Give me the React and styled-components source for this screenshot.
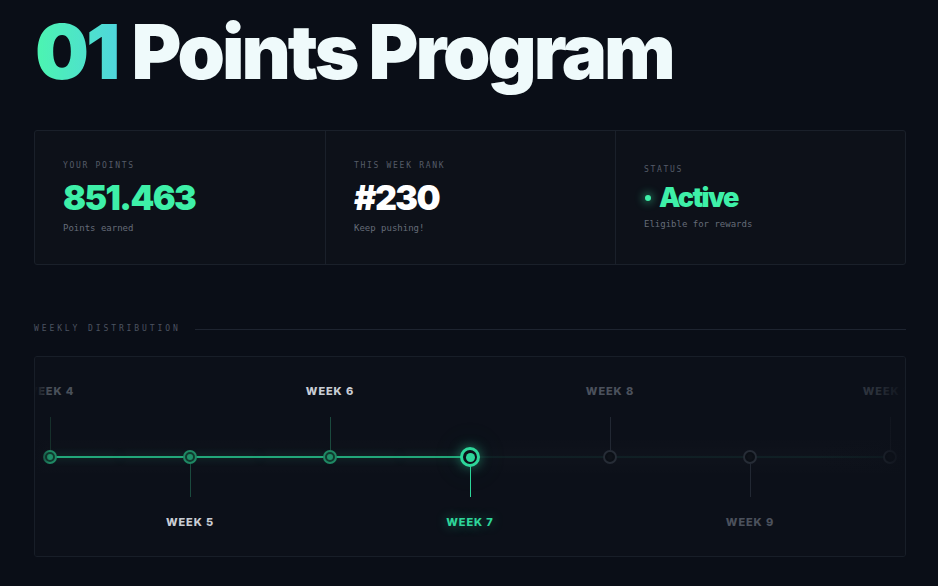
import React from 'react'
import styled, { createGlobalStyle, css } from 'styled-components'

const GREEN = '#2ed69a'
const MONO = `"DejaVu Sans Mono", "Liberation Mono", monospace`
const SANS = `Inter, "Liberation Sans", sans-serif`

const GlobalStyle = createGlobalStyle`
  html, body {
    margin: 0;
    padding: 0;
    background: #0a0e17;
  }
  body {
    font-family: ${SANS};
    color: #eef4f6;
  }
`

const Page = styled.div`
  width: 938px;
  height: 586px;
  box-sizing: border-box;
  padding: 13px 32px 0 34px;
  overflow: hidden;
  background: #0a0e17;
`

const Title = styled.h1`
  margin: 0 0 41px 1px;
  font-family: ${SANS};
  font-weight: 900;
  font-size: 76px;
  line-height: 76px;
  letter-spacing: -3px;
  color: #effafb;
  white-space: nowrap;
`

const TitleNum = styled.span`
  background: linear-gradient(90deg, #4cf5b0 0%, #4fd6dc 100%);
  -webkit-background-clip: text;
  background-clip: text;
  color: transparent;
  margin-right: 14px;
`

const StatsCard = styled.div`
  display: grid;
  grid-template-columns: repeat(3, 1fr);
  height: 135px;
  box-sizing: border-box;
  border: 1px solid #1a202a;
  border-radius: 3px;
  background: #0d1119;
`

const StatCell = styled.div`
  display: flex;
  flex-direction: column;
  justify-content: center;
  padding: 0 28px;
  & + & {
    border-left: 1px solid #1a202a;
  }
`

const StatLabel = styled.div`
  font-family: ${MONO};
  font-size: 8px;
  line-height: 10px;
  letter-spacing: 1.7px;
  color: #555c68;
  text-transform: uppercase;
`

const StatValue = styled.div`
  margin-top: 8px;
  font-family: ${SANS};
  font-weight: 900;
  font-size: ${({ $size }) => $size || 34}px;
  line-height: 1.1;
  letter-spacing: -1.6px;
  color: ${({ $tone }) => ($tone === 'green' ? '#3ef0a8' : '#ffffff')};
  display: flex;
  align-items: center;
`

const StatusDot = styled.span`
  width: 6px;
  height: 6px;
  border-radius: 50%;
  background: #3ef0a8;
  box-shadow: 0 0 8px 2px rgba(62, 240, 168, 0.45);
  margin: 0 8px 0 1px;
`

const StatNote = styled.div`
  margin-top: 6px;
  font-family: ${MONO};
  font-size: 9px;
  line-height: 12px;
  color: #656c78;
`

const SectionHead = styled.div`
  display: flex;
  align-items: center;
  gap: 14px;
  margin: 59px 0 22px;
  height: 10px;
`

const SectionLabel = styled.div`
  font-family: ${MONO};
  font-size: 8px;
  line-height: 10px;
  letter-spacing: 2.9px;
  color: #4c5360;
  white-space: nowrap;
`

const SectionRule = styled.div`
  flex: 1;
  height: 1px;
  background: #1e2430;
`

const TimelineCard = styled.div`
  position: relative;
  height: 201px;
  box-sizing: border-box;
  border: 1px solid #181e28;
  border-radius: 3px;
  background:
    linear-gradient(180deg, transparent 40%, rgba(255, 255, 255, 0.012) 50%, transparent 60%),
    #0c1019;
  overflow: hidden;

  &::before,
  &::after {
    content: '';
    position: absolute;
    top: 0;
    bottom: 0;
    pointer-events: none;
    z-index: 3;
  }
  &::before {
    left: 0;
    width: 14px;
    background: linear-gradient(90deg, #0c1019 0%, rgba(12, 16, 25, 0) 100%);
  }
  &::after {
    right: 0;
    width: 90px;
    background: linear-gradient(90deg, rgba(12, 16, 25, 0) 0%, rgba(12, 16, 25, 0.35) 70%, rgba(12, 16, 25, 0.7) 86%, #0c1019 100%);
  }
`

const Track = styled.div`
  display: flex;
  margin-left: -55px;
  padding-top: 27px;
`

const Week = styled.div`
  flex: none;
  width: 140px;
  display: flex;
  flex-direction: column;
  align-items: center;
`

const WeekLabel = styled.div`
  height: 14px;
  font-family: ${SANS};
  font-weight: 800;
  font-size: 11px;
  line-height: 14px;
  letter-spacing: 0.9px;
  white-space: nowrap;
  color: ${({ $color }) => $color};
  visibility: ${({ $show }) => ($show ? 'visible' : 'hidden')};
  ${({ $glow }) => $glow && css`text-shadow: 0 0 12px rgba(46, 214, 154, 0.45);`}
`

const Stem = styled.div`
  width: 1px;
  height: 33px;
  margin: ${({ $side }) => ($side === 'top' ? '19px 0 0' : '0 0 18px')};
  background: ${({ $color }) => $color};
  visibility: ${({ $show }) => ($show ? 'visible' : 'hidden')};
`

const lineTone = {
  none: 'transparent',
  done: '#22a679',
  todo: 'rgba(46, 214, 154, 0.07)',
}

const NodeRow = styled.div`
  position: relative;
  width: 100%;
  height: 14px;
  display: flex;
  align-items: center;
  justify-content: center;

  &::before,
  &::after {
    content: '';
    position: absolute;
    top: 6px;
    height: 2px;
    width: 50%;
  }
  &::before {
    left: 0;
    background: ${({ $left }) => lineTone[$left]};
    ${({ $left }) => $left === 'done' && css`box-shadow: 0 0 8px rgba(46, 214, 154, 0.3);`}
  }
  &::after {
    left: 50%;
    background: ${({ $right }) => lineTone[$right]};
    ${({ $right }) => $right === 'done' && css`box-shadow: 0 0 8px rgba(46, 214, 154, 0.3);`}
  }
`

const nodeStyles = {
  done: css`
    width: 14px;
    height: 14px;
    border: 2px solid rgba(46, 214, 154, 0.5);
    background: #103a2e;
    &::after {
      width: 6px;
      height: 6px;
      background: #1f8e68;
    }
  `,
  current: css`
    width: 20px;
    height: 20px;
    border: 3px solid ${GREEN};
    background: #0c1019;
    box-shadow: 0 0 12px rgba(46, 214, 154, 0.5), 0 0 36px 4px rgba(46, 214, 154, 0.07);
    &::after {
      width: 9px;
      height: 9px;
      background: ${GREEN};
    }
  `,
  todo: css`
    width: 14px;
    height: 14px;
    border: 2px solid #262c36;
    background: #0b0f16;
    &::after {
      width: 6px;
      height: 6px;
      background: #0e1219;
    }
  `,
}

const Node = styled.div`
  position: relative;
  z-index: 2;
  flex: none;
  box-sizing: border-box;
  border-radius: 50%;
  display: flex;
  align-items: center;
  justify-content: center;
  &::after {
    content: '';
    border-radius: 50%;
  }
  ${({ $state }) => nodeStyles[$state]}
`

const weeks = [
  { n: 4, side: 'top', state: 'done', left: 'none', right: 'done', label: '#4a505a', stem: '#16302b' },
  { n: 5, side: 'bottom', state: 'done', left: 'done', right: 'done', label: '#c9cdd4', stem: '#1b4a3e' },
  { n: 6, side: 'top', state: 'done', left: 'done', right: 'done', label: '#c9cdd4', stem: '#1b4a3e' },
  { n: 7, side: 'bottom', state: 'current', left: 'done', right: 'todo', label: GREEN, stem: GREEN },
  { n: 8, side: 'top', state: 'todo', left: 'todo', right: 'todo', label: '#4b515c', stem: '#222833' },
  { n: 9, side: 'bottom', state: 'todo', left: 'todo', right: 'todo', label: '#4b515c', stem: '#222833' },
  { n: 10, side: 'top', state: 'todo', left: 'todo', right: 'none', label: '#3a404a', stem: '#1c212a' },
]

function WeekItem({ week }) {
  const top = week.side === 'top'
  const label = `WEEK ${week.n}`
  return (
    <Week>
      <WeekLabel $show={top} $color={week.label}>{label}</WeekLabel>
      <Stem $side="top" $show={top} $color={week.stem} />
      <NodeRow $left={week.left} $right={week.right}>
        <Node $state={week.state} />
      </NodeRow>
      <Stem $side="bottom" $show={!top} $color={week.stem} />
      <WeekLabel $show={!top} $color={week.label} $glow={week.state === 'current'}>
        {label}
      </WeekLabel>
    </Week>
  )
}

export default function App() {
  return (
    <Page>
      <GlobalStyle />
      <Title>
        <TitleNum>01</TitleNum>Points Program
      </Title>

      <StatsCard>
        <StatCell>
          <StatLabel>Your Points</StatLabel>
          <StatValue $tone="green">851.463</StatValue>
          <StatNote>Points earned</StatNote>
        </StatCell>
        <StatCell>
          <StatLabel>This Week Rank</StatLabel>
          <StatValue>#230</StatValue>
          <StatNote>Keep pushing!</StatNote>
        </StatCell>
        <StatCell>
          <StatLabel>Status</StatLabel>
          <StatValue $tone="green" $size={27}>
            <StatusDot />
            Active
          </StatValue>
          <StatNote>Eligible for rewards</StatNote>
        </StatCell>
      </StatsCard>

      <SectionHead>
        <SectionLabel>WEEKLY DISTRIBUTION</SectionLabel>
        <SectionRule />
      </SectionHead>

      <TimelineCard>
        <Track>
          {weeks.map(w => (
            <WeekItem key={w.n} week={w} />
          ))}
        </Track>
      </TimelineCard>
    </Page>
  )
}
